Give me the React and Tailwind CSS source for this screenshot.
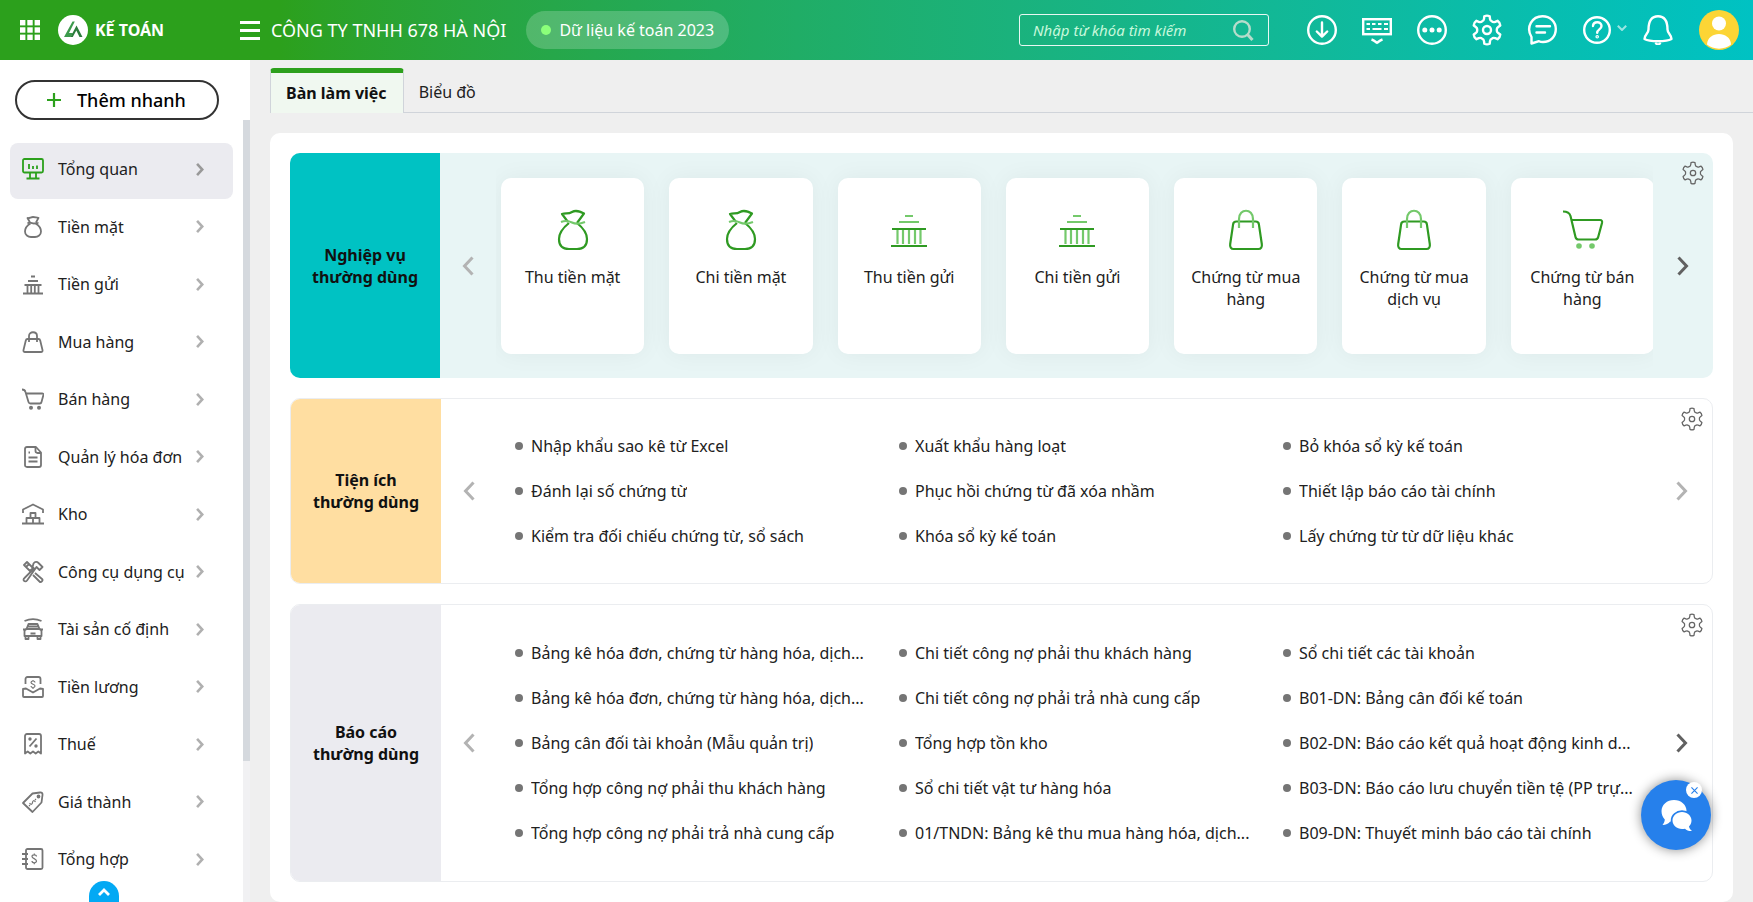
import React from "react";

const FONT = "font-['Noto_Sans',sans-serif]";

/* ---------- icon helpers ---------- */

const gearPath = (() => {
  const pt = (deg, r) => {
    const a = ((deg - 90) * Math.PI) / 180;
    return `${(16 + r * Math.cos(a)).toFixed(2)} ${(16 + r * Math.sin(a)).toFixed(2)}`;
  };
  let d = `M${pt(-11, 14)}`;
  for (let i = 0; i < 6; i++) {
    const c = i * 60;
    d += `Q${pt(c, 15)} ${pt(c + 11, 14)}L${pt(c + 15, 11.6)}Q${pt(c + 20, 9.6)} ${pt(c + 30, 9.9)}Q${pt(c + 40, 9.6)} ${pt(c + 45, 11.6)}L${pt(c + 49, 14)}`;
  }
  return d + "Z";
})();

function Gear({ className, stroke, r }) {
  return (
    <svg viewBox="0 0 32 32" className={className} fill="none" stroke="currentColor" strokeWidth={stroke} strokeLinejoin="round">
      <path d={gearPath} />
      <circle cx="16" cy="16" r={r} />
    </svg>
  );
}

function Chevron({ dir, className, width = 3 }) {
  return (
    <svg viewBox="0 0 12 20" className={className} fill="none" stroke="currentColor" strokeWidth={width}>
      <path d={dir === "left" ? "M10.5 1.5 2.5 10l8 8.5" : "M1.5 1.5 9.5 10l-8 8.5"} />
    </svg>
  );
}

const side = {
  overview: (
    <>
      <rect x="1" y="1" width="20" height="13.5" rx="1.5" />
      <path d="M7 6v5M11 8v3M15 7.5V11M8 15v4.5M14 15v4.5M4.5 20.5h13" />
    </>
  ),
  cash: (
    <>
      <path d="M8.5 7.5C5 9.5 3 12.5 3 15.5 3 19 6 21 9 21h4c3 0 6-2 6-5.5 0-3-2-6-5.5-8" />
      <path d="M8 6.5 5.5 2c2 .3 3.500-1 5.500-1s3.500.8 5.500.8L14 6.500M5.500 7.500C8 5.500 10 7.500 12 7.500s3-.8 4.500-.3" />
    </>
  ),
  bank: <path d="M9 3.500h4M6 8h10M2.500 12h17M5.500 12v8M9.200 12v8M12.800 12v8M16.500 12v8M1 20.500h20" />,
  bag: (
    <>
      <path d="M5.500 8h11c1 0 1.500.6 1.700 1.500l2.300 9.500c.3 1.200-.3 2-1.500 2H3c-1.200 0-1.800-.8-1.500-2l2.300-9.500C4 8.600 4.500 8 5.500 8Z" />
      <path d="M7 11V5c0-5 8-5 8 0v6" />
    </>
  ),
  cart: (
    <>
      <path d="M0 1.500c2 0 3 .5 3.500 2.500L6.500 14c.3 1 .8 1.500 1.800 1.500h9.500c1 0 1.500-.5 1.700-1.500l1.900-7c.2-1-.3-1.500-1.200-1.500H4" />
      <g fill="currentColor" stroke="none">
        <circle cx="9" cy="19.800" r="2" />
        <circle cx="17" cy="19.800" r="2" />
      </g>
    </>
  ),
  invoice: (
    <>
      <path d="M5 1h9l5 5.500V19c0 1.300-.8 2-2 2H5c-1.300 0-2-.8-2-2V3c0-1.300.8-2 2-2Z" />
      <path d="M13.500 1.500V5c0 1.300.7 2 2 2h3.500M6.500 11.500h9M6.500 15.500h9M6.500 6.500h1.500" />
    </>
  ),
  store: (
    <path d="M1 10V6.500L11 1.500l10 5V10M0 20.500h22M8.500 15V10h5v5M4.500 20v-5h13v5M11 15v5" />
  ),
  tools: (
    <>
      <path d="m2 4 3-3 6 6-3 3ZM4 6l3-3M13 12l7 6c1.500 1.500-1 4-2.500 2.500L11 14" />
      <path d="M11.500 2.500C13 .5 15 .5 16.500 2l4 4-3 3-3-3L5 19.500C3 22 0 19 2.500 17L12 7.500 10.500 6Z" />
    </>
  ),
  car: (
    <>
      <path d="M2.500 3C8 .5 14 .5 19.500 3M4.500 11l2-5h9l2 5M6 8.500h10" />
      <path d="M2.500 18v-4.500c0-1.500 1-2.500 2.500-2.500h12c1.500 0 2.500 1 2.500 2.500V18ZM1 11.500h2M19 11.500h2M3.500 18v3h3v-3M15.500 18v3h3v-3M8.500 15.500h5" />
    </>
  ),
  salary: (
    <>
      <path d="M3.500 8V3c0-1.200.8-2 2-2h11c1.200 0 2 .8 2 2v5M1 13l3-.5 7 4 7-4 3 .5v7c0 .7-.4 1-1 1H2c-.6 0-1-.3-1-1Z" />
      <path strokeWidth="1.200" d="M13 6.500c0-2-4-2-4 0s4 1.500 4 3.500-4 2-4 0M11 4v1.300M11 11.500V13" />
    </>
  ),
  tax: (
    <>
      <path d="M3 20.500V3c0-1.200.8-2 2-2h12c1.200 0 2 .8 2 2v17.500l-2.700-2-2.600 2-2.700-2-2.700 2-2.600-2Z" />
      <path d="m7.500 13.500 7-8" />
      <circle cx="8" cy="6" r=".8" />
      <circle cx="14" cy="13" r=".8" />
    </>
  ),
  price: (
    <>
      <path d="M10.500 2.500 18 1.500c1.800-.2 2.700.7 2.500 2.500l-1 7.500-9 9.500L1 12Z" />
      <circle cx="16.500" cy="5.500" r="1" />
      <path strokeWidth="1.200" d="M7.500 12c1.500 2 2.800 1.500 3-.5s1.500-2.500 3-.5M8 14l-1 1M13 9l1-1" />
    </>
  ),
  ledger: (
    <>
      <rect x="4" y="1" width="16.500" height="20" rx="1.500" />
      <path d="M0 6h6M0 11h6M0 16h6" />
      <path strokeWidth="1.200" d="M14.500 8.500c0-2.200-4.500-2.200-4.500 0s4.500 2 4.500 4.500-4.500 2.200-4.500 0M12.300 5.500V7M12.300 14.700v1.500" />
    </>
  ),
};

function SideIcon({ name, active }) {
  return (
    <svg
      viewBox="0 0 22 22"
      className={active ? "h-[22px] w-[22px] shrink-0 text-[#2ca01c]" : "h-[22px] w-[22px] shrink-0 text-[#757575]"}
      fill="none"
      stroke="currentColor"
      strokeWidth="1.800"
      strokeLinejoin="round"
    >
      {side[name]}
    </svg>
  );
}

const D = "#2f9a22";
const L = "#74c96b";
const big = {
  cash: (
    <>
      <path stroke={D} d="M16 13C11 17 6 22 6 29c0 7 4 10 10 10h8c6 0 10-3 10-10 0-7-5-12-10-16" />
      <path stroke={D} d="M15 12 9 4c4-1.500 6 .5 10-2s8-.5 12 1.500L24 13" />
      <path stroke={L} d="M8 12c5-2 8-1 11 .5s8 1.500 13-.5" />
    </>
  ),
  bank: (
    <>
      <path stroke={L} d="M16 6h8M10 12h20M8.500 20v14M14 20v14M20 20v14M26 20v14M31.500 20v14" />
      <path stroke={D} d="M3 19h34M2 36h36" />
    </>
  ),
  bag: (
    <>
      <path stroke={D} d="M10.300 11.500h19.400c2 0 3 1 3.200 2.800L35.800 34c.5 3-.8 5-3.400 5H7.600c-2.600 0-3.900-2-3.400-5l2.900-19.700c.2-1.800 1.200-2.800 3.200-2.800Z" />
      <path stroke={L} d="M13 18V9c0-11 14-11 14 0v9" />
    </>
  ),
  cart: (
    <>
      <path stroke={D} d="M1 1.500c4 0 6.500 1 7.500 4.500L13.500 27c.5 2 1.500 2.500 3 2.500H33c2 0 2.800-.8 3.200-2.500L40 13c.4-2-.3-3-2-3H10" />
      <circle cx="17" cy="36" r="2.800" fill={L} />
      <circle cx="30" cy="36" r="2.800" fill={L} />
    </>
  ),
};

function BigIcon({ name }) {
  return (
    <svg viewBox="0 0 40 40" className="h-10 w-10 overflow-visible" fill="none" strokeWidth="2.200" strokeLinejoin="round">
      {big[name]}
    </svg>
  );
}

/* ---------- header ---------- */

function HeaderButton({ label, children }) {
  return (
    <button aria-label={label} className="flex h-[30px] w-[30px] shrink-0 items-center justify-center">
      {children}
    </button>
  );
}

function HIcon({ children }) {
  return (
    <svg viewBox="0 0 30 30" className="h-[30px] w-[30px]" fill="none" stroke="currentColor" strokeWidth="2.400" strokeLinecap="round" strokeLinejoin="round">
      {children}
    </svg>
  );
}

function Header() {
  return (
    <header className="flex h-[60px] shrink-0 items-center bg-linear-to-r from-[#2ca01c] from-16% to-[#00c2c3] pr-3.5 pl-5 text-white">
      <div className="flex w-[220px] shrink-0 items-center">
        <button aria-label="Ứng dụng">
          <svg viewBox="0 0 20 20" className="h-5 w-5" fill="currentColor">
            {[0, 7.3, 14.6].map((y) => [0, 7.3, 14.6].map((x) => <rect key={`${x}-${y}`} x={x} y={y} width="5.400" height="5.400" />))}
          </svg>
        </button>
        <svg viewBox="0 0 30 30" className="ml-[18px] h-[30px] w-[30px]">
          <circle cx="15" cy="15" r="15" fill="#fff" />
          <path d="M6 22 14.500 6.500h2.300L11 18h4l-2.300 4Z" fill="#3c9a4c" />
          <path d="m18.500 10.500 6 11.500h-3l-3.200-6.500-3.500 6.500h-2.300Z" fill="#2c7c3c" />
        </svg>
        <span className="ml-[7px] text-base font-bold">KẾ TOÁN</span>
      </div>
      <button aria-label="Menu" className="flex w-5 shrink-0 flex-col gap-[5px]">
        <span className="h-[3px] bg-white" />
        <span className="h-[3px] bg-white" />
        <span className="h-[3px] bg-white" />
      </button>
      <span className="ml-[11px] text-lg whitespace-nowrap">CÔNG TY TNHH 678 HÀ NỘI</span>
      <button className="ml-5 flex h-[38px] shrink-0 items-center gap-2 rounded-full bg-white/20 px-[15px] text-base">
        <span className="h-2.5 w-2.5 rounded-full bg-[#8bff7a]" />
        Dữ liệu kế toán 2023
      </button>
      <div className="min-w-4 flex-1" />
      <label className="flex h-8 w-[250px] items-center rounded-[3px] border border-white/90 pr-3.5 pl-[13px]">
        <input
          aria-label="Tìm kiếm"
          placeholder="Nhập từ khóa tìm kiếm"
          className="min-w-0 flex-1 bg-transparent text-[15px] italic outline-none placeholder:text-[#c8f8dc]"
        />
        <svg viewBox="0 0 21 21" className="h-[21px] w-[21px] text-[#b5dccb]" fill="none" stroke="currentColor" strokeWidth="2.400">
          <circle cx="9" cy="9" r="7.800" />
          <path d="m14.500 14.500 5 5.500" strokeWidth="3" />
        </svg>
      </label>
      <div className="ml-[38px] flex items-center gap-[25px]">
        <HeaderButton label="Tải xuống">
          <HIcon>
            <circle cx="15" cy="15" r="13.800" />
            <path d="M15 7.500v14M9.800 16.500l5.200 5.200 5.200-5.200" />
          </HIcon>
        </HeaderButton>
        <HeaderButton label="Phím tắt">
          <svg viewBox="0 0 30 30" className="h-[30px] w-[30px]" fill="none" stroke="currentColor" strokeWidth="2.400">
            <rect x="1.200" y="4.200" width="27.600" height="15" />
            <path strokeWidth="2.200" d="M4.500 9h3.500M10 9h3.500M16 9h3.500M22 9h4M4.500 14h3.500M10.500 14h9M22 14h4" />
            <path d="M9.500 24.500c3 1 4 2.500 5.500 3.300 1.500-.8 2.500-2.300 5.500-3.300" />
          </svg>
        </HeaderButton>
        <HeaderButton label="Thêm">
          <HIcon>
            <circle cx="15" cy="15" r="13.800" />
            <g fill="currentColor" stroke="none">
              <circle cx="7.800" cy="15" r="2.500" />
              <circle cx="15" cy="15" r="2.500" />
              <circle cx="22.200" cy="15" r="2.500" />
            </g>
          </HIcon>
        </HeaderButton>
        <HeaderButton label="Thiết lập">
          <Gear className="h-8 w-8 shrink-0" stroke={2.4} r={4} />
        </HeaderButton>
        <HeaderButton label="Tin nhắn">
          <HIcon>
            <path d="M4.500 28.500V22C-1.500 12 5 1.200 15.500 1.200 23 1.200 28.800 6.500 28.800 14s-5.300 13-12.800 13c-1.500 0-3-.3-4-.8Z" />
            <path d="M9.500 11.200h13.500M9.500 17.500h8.500" />
          </HIcon>
        </HeaderButton>
        <HeaderButton label="Trợ giúp">
          <HIcon>
            <circle cx="15" cy="15" r="12.800" />
            <path d="M11 11c.2-5 8.500-5 8.500 0 0 3.500-4.300 3.300-4.300 6.800" />
            <circle cx="15.200" cy="21.800" r=".6" />
          </HIcon>
        </HeaderButton>
      </div>
      <svg viewBox="0 0 10 6" className="mr-4 mb-1 ml-[5px] h-1.5 w-2.5 shrink-0 text-white/60" fill="none" stroke="currentColor" strokeWidth="2">
        <path d="M.8.8 5 5 9.200.8" />
      </svg>
      <HeaderButton label="Thông báo">
        <HIcon>
          <path d="M5.500 14.500C5.500 5.500 9 1.200 15 1.200s9.500 4.300 9.500 13.300c0 4 4 5 4 9.500-5 3-22 3-27 0 0-4.500 4-5.500 4-9.500Z" />
          <path d="M13 28.500c1 1 3 1 4 0" />
        </HIcon>
      </HeaderButton>
      <button aria-label="Tài khoản" className="ml-[26px] h-10 w-10 shrink-0">
        <svg viewBox="0 0 40 40" className="h-10 w-10">
          <circle cx="20" cy="20" r="20" fill="#fcd535" />
          <circle cx="20" cy="13.500" r="7" fill="#fff" />
          <path d="M8 34.500c.5-14 23.500-14 24 0-6 5.500-18 5.500-24 0Z" fill="#fff" />
        </svg>
      </button>
    </header>
  );
}

/* ---------- sidebar ---------- */

const menu = [
  ["overview", "Tổng quan"],
  ["cash", "Tiền mặt"],
  ["bank", "Tiền gửi"],
  ["bag", "Mua hàng"],
  ["cart", "Bán hàng"],
  ["invoice", "Quản lý hóa đơn"],
  ["store", "Kho"],
  ["tools", "Công cụ dụng cụ"],
  ["car", "Tài sản cố định"],
  ["salary", "Tiền lương"],
  ["tax", "Thuế"],
  ["price", "Giá thành"],
  ["ledger", "Tổng hợp"],
];

function Sidebar() {
  return (
    <aside className="relative flex w-[250px] shrink-0 flex-col bg-white">
      <div className="flex h-[60px] shrink-0 items-end pr-[31px] pl-[15px]">
        <button className="flex h-10 flex-1 items-center rounded-full border-2 border-[#333] pl-[30px] text-lg font-medium text-black">
          <svg viewBox="0 0 14 14" className="mr-4 h-3.5 w-3.5 text-[#2ca01c]" stroke="currentColor" strokeWidth="2.200">
            <path d="M7 0v14M0 7h14" />
          </svg>
          Thêm nhanh
        </button>
      </div>
      <div className="flex min-h-0 flex-1 justify-between">
        <nav className="flex flex-1 flex-col justify-between pt-[23px] pr-2.5 pb-[13px] pl-2.5">
          {menu.map(([icon, label], i) => (
            <a
              key={label}
              href="#"
              className={
                i === 0
                  ? "flex h-14 shrink-0 items-center rounded-lg bg-[#ebebf0] pr-[29px] pb-1 pl-3 text-base text-[#212121]"
                  : "flex h-14 shrink-0 items-center rounded-lg pr-[29px] pb-1 pl-3 text-base text-[#212121]"
              }
            >
              <SideIcon name={icon} active={i === 0} />
              <span className="ml-3.5 flex-1 whitespace-nowrap">{label}</span>
              <Chevron dir="right" className={i === 0 ? "h-[13px] w-2 text-[#999]" : "h-[13px] w-2 text-[#b0b0b0]"} width={4} />
            </a>
          ))}
        </nav>
        <div className="w-[7px] bg-[#f1f1f3]">
          <div className="h-[82%] bg-[#d5d9de]" />
        </div>
      </div>
      <button
        aria-label="Cuộn lên"
        className="absolute bottom-0 left-[89px] flex h-[21px] w-[30px] items-center justify-center rounded-t-full bg-[#03a9f4] text-white"
      >
        <svg viewBox="0 0 12 8" className="h-2 w-3" fill="none" stroke="currentColor" strokeWidth="2.800">
          <path d="M1 7 6 2l5 5" />
        </svg>
      </button>
    </aside>
  );
}

/* ---------- content ---------- */

const shortcuts = [
  ["cash", "Thu tiền mặt"],
  ["cash", "Chi tiền mặt"],
  ["bank", "Thu tiền gửi"],
  ["bank", "Chi tiền gửi"],
  ["bag", "Chứng từ mua hàng"],
  ["bag", "Chứng từ mua dịch vụ"],
  ["cart", "Chứng từ bán hàng"],
];

const utilities = [
  "Nhập khẩu sao kê từ Excel",
  "Xuất khẩu hàng loạt",
  "Bỏ khóa sổ kỳ kế toán",
  "Đánh lại số chứng từ",
  "Phục hồi chứng từ đã xóa nhầm",
  "Thiết lập báo cáo tài chính",
  "Kiểm tra đối chiếu chứng từ, sổ sách",
  "Khóa sổ kỳ kế toán",
  "Lấy chứng từ từ dữ liệu khác",
];

const reports = [
  "Bảng kê hóa đơn, chứng từ hàng hóa, dịch...",
  "Chi tiết công nợ phải thu khách hàng",
  "Sổ chi tiết các tài khoản",
  "Bảng kê hóa đơn, chứng từ hàng hóa, dịch...",
  "Chi tiết công nợ phải trả nhà cung cấp",
  "B01-DN: Bảng cân đối kế toán",
  "Bảng cân đối tài khoản (Mẫu quản trị)",
  "Tổng hợp tồn kho",
  "B02-DN: Báo cáo kết quả hoạt động kinh d...",
  "Tổng hợp công nợ phải thu khách hàng",
  "Sổ chi tiết vật tư hàng hóa",
  "B03-DN: Báo cáo lưu chuyển tiền tệ (PP trự...",
  "Tổng hợp công nợ phải trả nhà cung cấp",
  "01/TNDN: Bảng kê thu mua hàng hóa, dịch...",
  "B09-DN: Thuyết minh báo cáo tài chính",
];

function Section({ title, className, labelClass, nextActive, children }) {
  return (
    <section className={`relative flex overflow-hidden rounded-[10px] ${className}`}>
      <h2 className={`flex w-[150px] shrink-0 items-center justify-center text-center text-base leading-[22px] font-bold text-[#111] ${labelClass}`}>
        <span>
          {title}
          <br />
          thường dùng
        </span>
      </h2>
      <button aria-label="Trước" className="flex w-14 shrink-0 items-center justify-center text-[#b3b3b3]">
        <Chevron dir="left" className="h-5 w-3" />
      </button>
      <div className="min-w-0 flex-1 overflow-hidden">{children}</div>
      <button
        aria-label="Sau"
        className={
          nextActive
            ? "flex w-[60px] shrink-0 items-center justify-center text-[#616161]"
            : "flex w-[60px] shrink-0 items-center justify-center text-[#b3b3b3]"
        }
      >
        <Chevron dir="right" className="h-5 w-3" />
      </button>
      <button aria-label="Tùy chỉnh" className="absolute top-2 right-2 text-[#666]">
        <Gear className="h-6 w-6" stroke={1.7} r={3.6} />
      </button>
    </section>
  );
}

function LinkGrid({ items }) {
  return (
    <ul className="grid grid-cols-3 pl-[3px]">
      {items.map((text, i) => (
        <li key={i} className="flex h-[45px] min-w-0 items-center pr-3.5 pl-[15px]">
          <span className="mr-2 h-2 w-2 shrink-0 rounded-full bg-[#757575]" />
          <a href="#" className="truncate text-base text-[#212121]">
            {text}
          </a>
        </li>
      ))}
    </ul>
  );
}

export default function App() {
  return (
    <div className={`flex h-screen flex-col overflow-hidden bg-[#efefef] ${FONT}`}>
      <Header />
      <div className="flex min-h-0 flex-1">
        <Sidebar />
        <main className="min-w-0 flex-1 overflow-y-auto [scrollbar-width:none]">
          <div role="tablist" className="flex h-[53px] items-end pl-5">
            <button
              role="tab"
              aria-selected="true"
              className="h-[45px] rounded-t border-x border-t-[5px] border-x-[#d0d4da] border-t-[#2ca01c] bg-[#f0f8f0] pr-4 pl-[15px] text-base font-bold text-[#111]"
            >
              Bàn làm việc
            </button>
            <div className="flex h-[45px] flex-1 border-b border-[#d0d4da]">
              <button role="tab" aria-selected="false" className="px-[15px] pt-1 text-base text-[#212121]">
                Biểu đồ
              </button>
            </div>
          </div>
          <div className="mx-5 mt-5 flex flex-col gap-5 rounded-[10px] bg-white p-5">
            <Section title="Nghiệp vụ" className="bg-[#e8f5f5]" labelClass="bg-[#00c2c3]" nextActive>
              <div className="-mr-px grid grid-cols-7 gap-[25px] pt-[25px] pb-6 pl-[5px]">
                {shortcuts.map(([icon, label]) => (
                  <a
                    key={label}
                    href="#"
                    className="flex h-44 flex-col items-center rounded-[10px] bg-white px-2 pt-8 text-center text-base leading-[22px] text-[#212121] shadow-[0_0_24px_rgba(0,0,0,0.05)]"
                  >
                    <BigIcon name={icon} />
                    <span className="mt-4">{label}</span>
                  </a>
                ))}
              </div>
            </Section>
            <Section title="Tiện ích" className="border border-[#ebedf0]" labelClass="bg-[#ffdea1]">
              <div className="pt-6 pb-[25px]">
                <LinkGrid items={utilities} />
              </div>
            </Section>
            <Section title="Báo cáo" className="border border-[#ebedf0]" labelClass="bg-[#ebebf0]" nextActive>
              <div className="pt-[25px] pb-[26px]">
                <LinkGrid items={reports} />
              </div>
            </Section>
          </div>
        </main>
      </div>
      <div className="fixed right-[42px] bottom-[52px]">
        <button aria-label="Trò chuyện" className="flex h-[70px] w-[70px] items-center justify-center rounded-full bg-[#2680eb] text-white shadow-[0_0_12px_rgba(0,0,0,0.45)]">
          <svg viewBox="0 0 31 31" className="h-[31px] w-[31px] overflow-visible" fill="currentColor">
            <path d="M13 0C20 0 25.500 4.800 25.500 11S20 22 13 22c-1.300 0-2.600-.2-3.800-.5C7.500 23.500 5 25 1.500 25c1.200-1.500 2.200-3.300 2.300-5.500C1.700 17.500.5 14.500.5 11 .5 4.800 6 0 13 0Z" />
            <path
              stroke="#2680eb"
              strokeWidth="3.500"
              paintOrder="stroke"
              d="M21 12c5.300 0 9.500 3.900 9.500 8.500 0 2.500-1.100 4.500-2.500 6 .3 1.700 1.500 3.200 3 4.500-3 .2-5.500-.7-7-2.300-1 .2-2 .3-3 .3-5.300 0-9.500-3.900-9.500-8.500S15.700 12 21 12Z"
            />
          </svg>
        </button>
        <button aria-label="Đóng" className="absolute top-0.5 right-[9px] flex h-4 w-4 items-center justify-center rounded-full bg-white text-[#2680eb]">
          <svg viewBox="0 0 8 8" className="h-[7px] w-[7px]" stroke="currentColor" strokeWidth="1.300">
            <path d="m.5.5 7 7M7.500.5l-7 7" />
          </svg>
        </button>
      </div>
    </div>
  );
}
